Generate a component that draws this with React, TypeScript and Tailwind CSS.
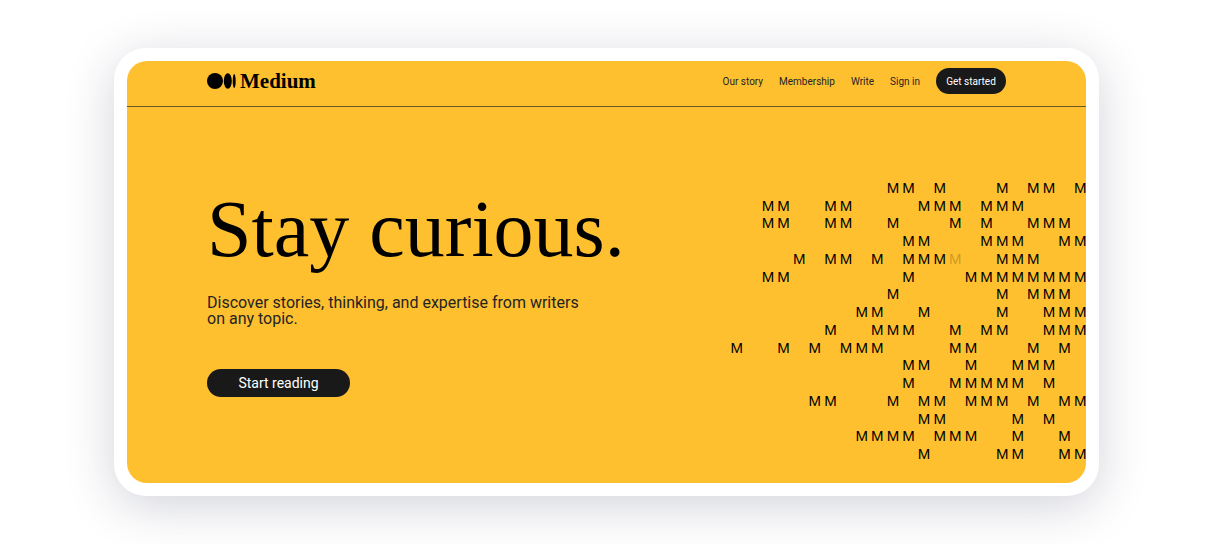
const navLinks = ["Our story", "Membership", "Write", "Sign in"];

// M = letter, m = faded letter, . = empty cell
const pattern = [
  "..........MM.M...M.MM.M",
  "..MM..MM....MMM.MMM....",
  "..MM..MM..M...M.M..MMM.",
  "...........MM...MMM..MM",
  "....M.MM.M.MMMm..MMM...",
  "..MM.......M...MMMMMMMM",
  "..........M......M.MMM.",
  "........MM..M....M..MMM",
  "......M..MMM..M.MM..MMM",
  "M..M.M.MMM....MM...M.M.",
  "...........MM..M..MMM..",
  "...........M..MMMMM.M..",
  ".....MM...M.MM.MMM.M.MM",
  "............MM....M.M..",
  "........MMMM.MMM..M..M.",
  "............M....MM..MM",
];

function Logo() {
  return (
    <a href="#" className="flex items-center gap-1 text-black">
      <svg width="29" height="16" viewBox="0 0 29 16" fill="currentColor" aria-hidden="true">
        <circle cx="8" cy="8" r="8" />
        <ellipse cx="20.8" cy="8" rx="4" ry="7.8" />
        <ellipse cx="27.2" cy="8" rx="1.5" ry="7" />
      </svg>
      <span className="font-['Liberation_Serif',serif] text-[21px] leading-6 font-bold">
        Medium
      </span>
    </a>
  );
}

function Header() {
  return (
    <header className="flex h-[46px] items-center justify-between border-b border-[#6f5824] px-20 pb-[5px]">
      <Logo />
      <nav className="flex items-center gap-4 text-[10px]">
        {navLinks.map((text) => (
          <a href="#" key={text}>
            {text}
          </a>
        ))}
        <button className="h-[26px] w-[70px] rounded-full bg-[#191919] text-white">
          Get started
        </button>
      </nav>
    </header>
  );
}

function Pattern() {
  return (
    <div
      aria-hidden="true"
      className="-mr-0.5 grid h-[284px] w-[359px] shrink-0 grid-cols-23 grid-rows-16 font-['Liberation_Sans',sans-serif] text-[15px] leading-4 text-black"
    >
      {pattern.map((row, y) =>
        row.split("").map((cell, x) => (
          <span
            key={`${y}-${x}`}
            className={
              cell === "m"
                ? "flex items-center justify-center opacity-20"
                : "flex items-center justify-center"
            }
          >
            {cell === "." ? "" : "M"}
          </span>
        ))
      )}
    </div>
  );
}

function Hero() {
  return (
    <section className="flex justify-between overflow-hidden pt-[72px] pb-5 pl-20">
      <div className="pt-2">
        <h1 className="font-['Liberation_Serif',serif] text-[80px] leading-[84px] whitespace-nowrap text-black">
          Stay curious.
        </h1>
        <p className="mt-6 w-[384px] text-[16px] leading-4">
          Discover stories, thinking, and expertise from writers on any topic.
        </p>
        <button className="mt-[42px] h-7 w-[143px] rounded-full bg-[#191919] text-[14px] text-white">
          Start reading
        </button>
      </div>
      <Pattern />
    </section>
  );
}

export default function App() {
  return (
    <main className="bg-white px-[114px] py-12 font-[Roboto,sans-serif] text-[#242424]">
      <div className="rounded-[32px] bg-white p-[13px] shadow-[0_10px_50px_rgba(30,35,70,0.2)]">
        <div className="overflow-hidden rounded-[20px] bg-[#ffc02f]">
          <Header />
          <Hero />
        </div>
      </div>
    </main>
  );
}
